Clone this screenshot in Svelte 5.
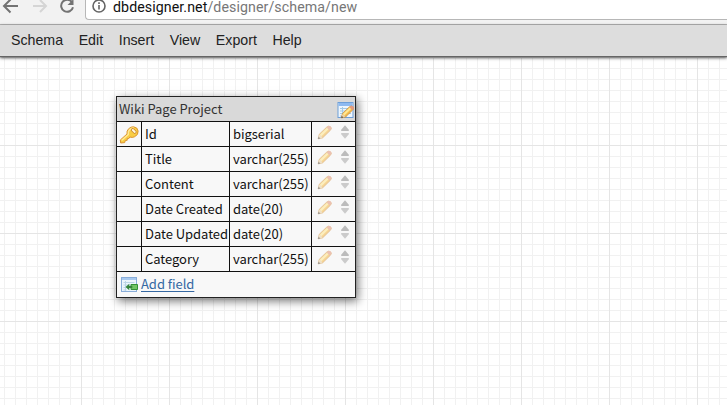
<script>
  const menu = ['Schema', 'Edit', 'Insert', 'View', 'Export', 'Help'];
  const fields = [
    { name: 'Id', type: 'bigserial', key: true },
    { name: 'Title', type: 'varchar(255)' },
    { name: 'Content', type: 'varchar(255)' },
    { name: 'Date Created', type: 'date(20)' },
    { name: 'Date Updated', type: 'date(20)' },
    { name: 'Category', type: 'varchar(255)' }
  ];
</script>

{#snippet pencil()}
  <path d="M1.2 14.8 2.4 9.9 10.3 2.3Q12.5.3 14.4 2.1T14 5.9L6 13.7Z" fill="#f5bb4d" stroke="#c98a35" stroke-width=".8" />
  <path d="M3.7 11.3 11.5 3.8" stroke="#ffe894" stroke-width="2.4" />
  <path d="M10.4 2.3 11.7 1.2Q13.2.3 14.7 1.7T14.7 4.8L13.6 6Z" fill="#e39a80" />
  <path d="M1.2 14.8 2.3 10.5Q4.8 10.8 5.6 13.6Z" fill="#ead2a8" />
  <path d="m1 15 .7-2.5 1.8 1.8Z" fill="#4b4540" />
{/snippet}

<div class="window">
  <header class="browser">
    <svg class="back" width="17" height="16" viewBox="0 0 17 16"><path d="M16 8H2M8.5 1.5 2 8l6.5 6.5" /></svg>
    <svg class="forward" width="16" height="16" viewBox="0 0 16 16"><path d="M1 8h13M8 2l6 6-6 6" /></svg>
    <svg class="reload" width="16" height="16" viewBox="0 0 16 16"><path d="M13 4.2A6 6 0 1 0 14 9.2" /><path d="M14.5 1v6h-6Z" class="solid" /></svg>
    <div class="address">
      <svg width="14" height="14" viewBox="0 0 14 14"><circle cx="7" cy="7" r="6" /><path d="M7 6v4.5M7 3.2v1.7" /></svg>
      <span class="url"><b>dbdesigner.net</b>/designer/schema/new</span>
    </div>
  </header>
  <nav>
    {#each menu as item}<span>{item}</span>{/each}
  </nav>
  <main>
    <section class="entity">
      <div class="title">
        <span>Wiki Page Project</span>
        <svg width="17" height="18" viewBox="0 0 17 18">
          <rect x="1" y="1.5" width="15" height="15" fill="#eef6fd" stroke="#6e9fd8" />
          <path d="M1.5 3.5h14" stroke="#8ebaf0" stroke-width="3" />
          <path d="M3 7.5h11M3 10h11M3 12.5h11M3 15h7M5.5 6v10" stroke="#a4c9e5" />
          <g transform="translate(3.3 3.9) scale(.88)">{@render pencil()}</g>
        </svg>
      </div>
      {#each fields as field}
        <div class="row">
          <div class="key">
            {#if field.key}
              <svg width="20" height="18" viewBox="0 0 20 18">
                <path d="M1.3 14 8 8Q7.4 5 9.6 2.8T14.5.8Q18.6 1.1 19.1 5T15.5 10.8Q13.2 12 10.9 11L9.8 12.6 8.3 12.4 8.2 14.3 6.3 14.5 5.7 16.6 1.7 17Z" fill="#f9cd43" stroke="#db9433" />
                <path d="M2.6 14.5 9.3 8.5Q8.8 5.3 10.7 3.6T14.7 2" fill="none" stroke="#ffe994" stroke-width="1.5" />
                <path d="m13.7 3.9 2.1 2" stroke="#c98532" stroke-width="3.5" stroke-linecap="round" />
                <path d="m13.8 4 2 1.9" stroke="#fff8df" stroke-width="2" stroke-linecap="round" />
              </svg>
            {/if}
          </div>
          <div class="name">{field.name}</div>
          <div class="type">{field.type}</div>
          <div class="tools">
            <svg class="edit" width="15" height="15" viewBox="0 0 16 16">{@render pencil()}</svg>
            <svg class="sort" width="10" height="14" viewBox="0 0 10 14">
              <path d="M5 .3 9 5Q9.2 6 8 6H2Q.8 6 1 5Z" fill="#bcbcbc" />
              <path d="M5 13.7 9 9Q9.2 8 8 8H2Q.8 8 1 9Z" fill="#cbcbcb" />
            </svg>
          </div>
        </div>
      {/each}
      <div class="add">
        <svg width="18" height="16" viewBox="0 0 18 16">
          <rect x=".5" y=".5" width="15" height="14" fill="#edf5fc" stroke="#89add9" />
          <path d="M1 2h14" stroke="#a9caef" stroke-width="2" />
          <path d="M2.5 5.5h11M2.5 8h11M2.5 10.5h3M2.5 13h3M4.5 4v10" stroke="#bcd5e7" />
          <path d="M10 7.5h6.5v5H10Z" fill="#70c464" stroke="#329137" />
          <path d="M4.5 10 8.3 6.7v2.2h3v2.2h-3v2.2Z" fill="#37853b" />
        </svg>
        <a href="#add">Add field</a>
      </div>
    </section>
  </main>
</div>

<style>
  :global(body) { margin: 0; overflow: hidden; }
  * { box-sizing: border-box; }
  svg { flex: none; display: block; }
  .window { width: 727px; height: 405px; display: flex; flex-direction: column; overflow: hidden; background: #fff; }
  .browser { height: 25px; flex: none; display: flex; align-items: flex-start; background: #f2f2f2; border-bottom: 1px solid #b3b3b3; }
  .browser svg { fill: none; stroke: #737373; stroke-width: 2; }
  .browser .back { margin: -2px 0 0 2px; }
  .browser .forward { margin: -2px 0 0 13px; stroke: #d5d5d5; }
  .browser .reload { margin: -2px 0 0 11px; }
  .browser .solid { fill: #737373; stroke: none; }
  .address { flex: 1; height: 20px; margin-left: 10px; display: flex; border: 1px solid #b7b7b7; border-top: 0; border-right: 0; border-radius: 0 0 0 4px; background: #fff; }
  .browser .address svg { margin: -1px 0 0 6px; stroke: #656565; stroke-width: 1.6; }
  .url { margin: -1px 0 0 7px; font: 14.2px/16px Roboto, sans-serif; letter-spacing: .08px; color: #777; white-space: nowrap; }
  .url b { font-weight: 400; color: #111; }
  nav { position: relative; z-index: 1; flex: none; height: 32px; display: flex; gap: 15.6px; padding-left: 11px; background: #ddd; border-bottom: 1px solid #656565; box-shadow: 0 1px 3px #555; font: 14.2px/31px "Liberation Sans", Arial, sans-serif; color: #222; }
  main {
    flex: 1; padding: 39px 0 0 116px;
    background:
      linear-gradient(90deg, #e5e5e5 1px, transparent 1px) 81px 0 / 88px 88px,
      linear-gradient(#e5e5e5 1px, transparent 1px) 0 88px / 88px 88px,
      linear-gradient(90deg, #f1f1f1 1px, transparent 1px) 4px 0 / 11px 11px,
      linear-gradient(#f1f1f1 1px, transparent 1px) 0 0 / 11px 11px, #fff;
  }
  .entity { width: 240px; height: 202px; border: 1px solid #222; background: #f8f8f8; box-shadow: 2px 3px 9px rgba(0,0,0,.55); font: 13px/24px "Noto Sans CJK SC", sans-serif; letter-spacing: -.04px; color: #111; white-space: nowrap; }
  .title { height: 25px; padding-left: 2px; display: flex; justify-content: space-between; background: #d9d9d9; border-bottom: 1px solid #111; color: #333; }
  .title svg { margin: 4px 1px 0 0; }
  .row { height: 25px; display: grid; grid-template-columns: 25px 88px 82px 43px; border-bottom: 1px solid #111; }
  .row > div:not(:last-child) { border-right: 1px solid #111; }
  .key svg { margin: 4px 0 0 2px; }
  .name { padding-left: 3px; }
  .type { padding-left: 3px; }
  .tools { display: flex; }
  .edit { margin: 3px 0 0 5px; opacity: .58; }
  .sort { margin: 3px 0 0 8px; }
  .add { height: 25px; display: flex; padding-left: 4px; }
  .add svg { margin-top: 5px; }
  .add a { margin-left: 2px; color: #3568a2; text-decoration: underline; text-underline-offset: 2px; }
</style>
